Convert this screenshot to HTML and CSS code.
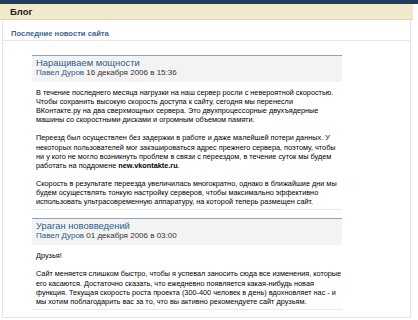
FILE: index.html
```html
<!DOCTYPE html>
<html lang="ru">
<head>
  <meta charset="UTF-8" />
  <title>Блог</title>
  <link rel="stylesheet" href="styles.css">
</head>
<body>
  <div class="topbar"></div>
  <div class="page">
    <div class="page-head">Блог</div>
    <div class="content">
      <div class="section-title">Последние новости сайта</div>

      <!-- Post 1 -->
      <div class="post">
        <div class="post-head">
          <div class="post-title">Наращиваем мощности</div>
          <div class="post-meta"><a href="#" class="author">Павел Дуров</a> 16 декабря 2006 в 15:36</div>
        </div>
        <div class="post-body">
          <p>В течение последнего месяца нагрузки на наш сервер росли с невероятной скоростью.<br>
          Чтобы сохранить высокую скорость доступа к сайту, сегодня мы перенесли<br>
          ВКонтакте.ру на два сверхмощных сервера. Это двухпроцессорные двухъядерные<br>
          машины со скоростными дисками и огромным объемом памяти.</p>
          <p>Переезд был осуществлен без задержки в работе и даже малейшей потери данных. У<br>
          некоторых пользователей мог закэшироваться адрес прежнего сервера, поэтому, чтобы<br>
          ни у кого не могло возникнуть проблем в связи с переездом, в течение суток мы будем<br>
          работать на поддомене <b>new.vkontakte.ru</b>.</p>
          <p>Скорость в результате переезда увеличилась многократно, однако в ближайшие дни мы<br>
          будем осуществлять тонкую настройку серверов, чтобы максимально эффективно<br>
          использовать ультрасовременную аппаратуру, на которой теперь размещен сайт.</p>
        </div>
      </div>

      <!-- Post 2 -->
      <div class="post">
        <div class="post-head">
          <div class="post-title">Ураган нововведений</div>
          <div class="post-meta"><a href="#" class="author">Павел Дуров</a> 01 декабря 2006 в 03:00</div>
        </div>
        <div class="post-body">
          <p>Друзья!</p>
          <p>Сайт меняется слишком быстро, чтобы я успевал заносить сюда все изменения, которые<br>
          его касаются. Достаточно сказать, что ежедневно появляется какая-нибудь новая<br>
          функция. Текущая скорость роста проекта (300-400 человек в день) вдохновляет нас - и<br>
          мы хотим поблагодарить вас за то, что вы активно рекомендуете сайт друзьям.</p>
        </div>
      </div>
    </div>
  </div>
</body>
</html>
```

FILE: styles.css
```css
*{margin:0;padding:0;box-sizing:border-box;}
html,body{width:418px;height:320px;overflow:hidden;background:#fff;
  font-family:"Liberation Sans",Arial,sans-serif;font-size:7.3px;color:#000;}

.topbar{height:4px;background:#1f3b5e;}

.page{width:413px;}

.page-head{height:16px;
  background:#f1e9cb;
  border-bottom:1px solid #e2d7ae;
  padding-left:10px;
  font-weight:bold;
  font-size:9.5px;
  line-height:15px;
  color:#1a1a1a;}

.content{margin-left:2px;
  width:409px;
  border:1px solid #dfe5eb;
  border-top:none;
  padding-bottom:7px;}

.section-title{height:21px;
  padding:9px 0 0 8px;
  line-height:10px;
  border-bottom:1px solid #e3e8ee;
  color:#3c6796;
  font-weight:bold;
  font-size:7.6px;}

.post{margin:14px 0 0 29px;
  width:310px;
  border-top:1px solid #8fa4ba;
  border-bottom:1px solid #e6e9ed;}
.post + .post{margin-top:8px;}

.post-head{background:#f3f3f3;
  height:26px;
  padding:2px 4px 0;}
.post-title{font-size:9.4px;
  line-height:10px;
  color:#2d5d8c;}
.post-meta{font-size:8px;line-height:10px;color:#333;}
.author{color:#2d5d8c;text-decoration:none;}

.post-body{padding:6px 4px 3px;line-height:9.1px;white-space:nowrap;}
.post-body p + p{margin-top:9.1px;}
```
